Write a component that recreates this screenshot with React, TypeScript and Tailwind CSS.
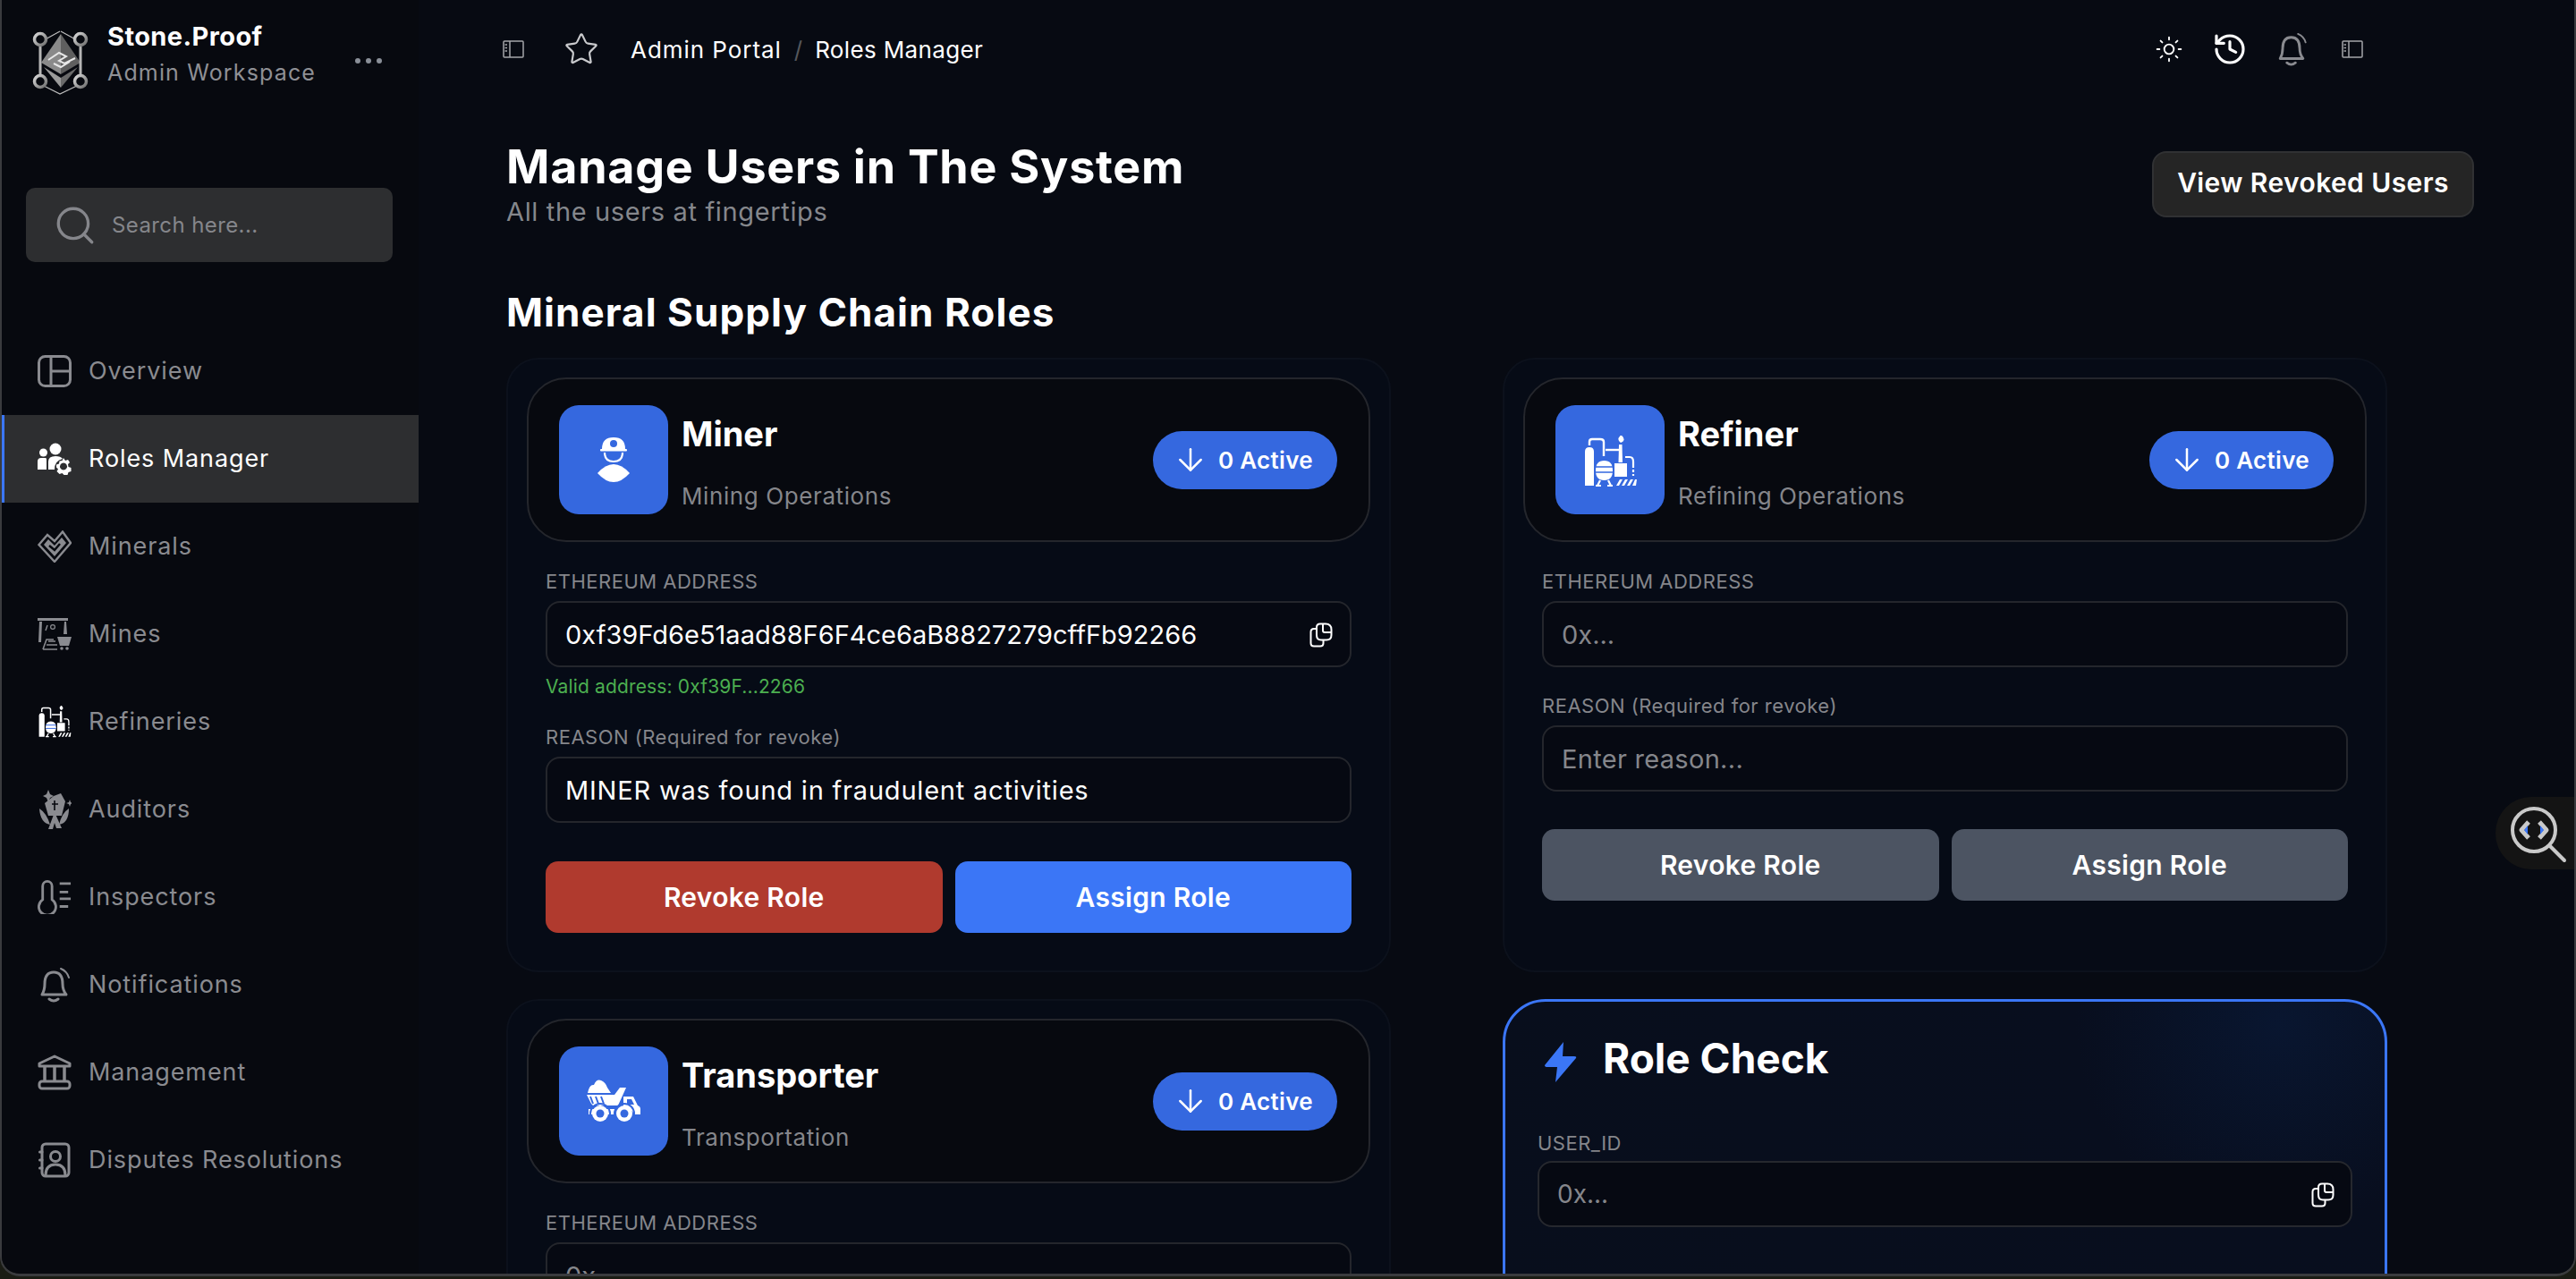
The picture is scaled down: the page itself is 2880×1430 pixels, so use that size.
import { ArrowDown, History, Search, Star, Sun } from "lucide-react";
import type { ReactNode } from "react";

type IconProps = { className?: string };

const Logo = () => (
  <svg viewBox="0 0 63 73" className="w-[63px] h-[73px] shrink-0">
    <defs>
      <linearGradient id="ring" x1="0" y1="0" x2="1" y2="1">
        <stop offset="0" stopColor="#d8d8d8" />
        <stop offset="1" stopColor="#6f6f6f" />
      </linearGradient>
    </defs>
    <path d="M31 2 L11 13 M32 2 L52 13 M11 62 L31 72 L52 62" fill="none" stroke="#bdbdbd" strokeWidth="1.2" />
    <path d="M32 5 L10 37 L32 50 Z" fill="#8a8a8a" />
    <path d="M32 5 L54 37 L32 50 Z" fill="#5f5f5f" />
    <path d="M13 42 L32 54 V65 Z" fill="#9a9a9a" />
    <path d="M51 42 L32 54 V65 Z" fill="#6a6a6a" />
    <path d="M18 34 L30 26 L38 30 L30 35 L36 38 L48 32 M24 38 L32 42 L42 36" fill="none" stroke="#e8e8e8" strokeWidth="2" />
    <path d="M9 19 V53 M54 19 V53" stroke="#b5b5b5" strokeWidth="3" />
    {[[9, 11], [54, 11], [9, 58], [54, 58]].map(([cx, cy]) => (
      <circle key={`${cx}-${cy}`} cx={cx} cy={cy} r="6.5" fill="#07090f" stroke="url(#ring)" strokeWidth="3.5" />
    ))}
  </svg>
);

const PanelIcon = ({ className }: IconProps) => (
  <svg viewBox="0 0 24 20" fill="none" stroke="currentColor" strokeWidth="1.5" className={className}>
    <rect x="1" y="1" width="22" height="18" rx="1" />
    <path d="M8 1 V19" />
    <path d="M2.5 5 H5 M2.5 8.5 H5 M2.5 12 H5" strokeWidth="1.4" />
  </svg>
);

const OverviewIcon = ({ className }: IconProps) => (
  <svg viewBox="0 0 38 36" fill="none" stroke="currentColor" strokeWidth="3" className={className}>
    <rect x="1.5" y="1.5" width="35" height="33" rx="7" />
    <path d="M15 2 V34 M15 18 H36" />
  </svg>
);

const RolesIcon = ({ className }: IconProps) => (
  <svg viewBox="0 0 38 36" fill="currentColor" className={className}>
    <circle cx="6.5" cy="11" r="4.5" />
    <circle cx="20" cy="7" r="6.5" />
    <path d="M0 30 V21 Q0 17 4 17 H9 Q10 17 10 19 V30 Z" />
    <path d="M12 30 V21 Q12 15 20 15 Q26 15 28 18 Q19 20 19 30 Z" />
    <path
      fillRule="evenodd"
      d="M29 17 l2 3 3 -1 2 3 -2 2 .5 3 3 1 V32 l-3 1 -1 3 h-4 l-2 -2 -3 1 -3 -3 1.5 -2.5 -2 -2 v-3 l3 -1 .5 -3 3 -.5 z M29 22.5 a4 4 0 1 0 .01 0 z"
    />
  </svg>
);

const MineralsIcon = ({ className }: IconProps) => (
  <svg viewBox="0 0 38 36" fill="none" stroke="currentColor" strokeWidth="2.4" className={className}>
    <path d="M1.5 16 L11 5 L19 12 L28 1.5 L37 14 L19 35 Z" />
    <path d="M7 16 L12 10 L19 17 L27 8 L32 14 L19 29 Z" fill="currentColor" stroke="none" />
    <path d="M13 17 L19 22 L25 15" stroke="#07090f" strokeWidth="2.5" />
  </svg>
);

const MinesIcon = ({ className }: IconProps) => (
  <svg viewBox="0 0 38 36" fill="currentColor" className={className}>
    <path d="M0 0 H34 V3 H0 Z" />
    <path d="M2 4 H5 L4 27 H1 Z M30 4 H32 L33 18 H29 Z" />
    <path d="M9 14 L11 8" stroke="currentColor" strokeWidth="1.4" />
    <circle cx="17" cy="10" r="2.4" fill="none" stroke="currentColor" strokeWidth="1.2" />
    <path d="M22 21 H38 L35 31 H25 Z" />
    <circle cx="27" cy="34" r="1.8" />
    <circle cx="33" cy="34" r="1.8" />
    <path d="M6 35 L10 24 H18 M10 30 H22 M6 35 H22 M12 26 H20" fill="none" stroke="currentColor" strokeWidth="1.6" />
  </svg>
);

const RefineryIcon = ({ className }: IconProps) => (
  <svg viewBox="32 34 60 58" fill="#fff" className={className}>
    <path d="M33 52 Q33 47 38 47 Q43 47 43 52 V90 H33 Z" />
    <path d="M38 45 V41 Q38 38 41 38 H50 Q54 38 54 41 V57" fill="none" stroke="#fff" strokeWidth="2.4" />
    <path d="M56 50 H71" stroke="#fff" strokeWidth="2.4" />
    <path d="M71 44 H74.5 L75 64 H70.5 Z" />
    <path d="M73 42 Q69 39 71 36 Q72 35 73 33 Q77 36 76.5 39 Q76 41 73 42 Z" />
    <path d="M45 73 Q45 62 54.5 62 Q64 62 64 73 Q64 84 54.5 84 Q45 84 45 73 Z" />
    <path d="M45 69 H64 M45 75 H64" stroke="#3568df" strokeWidth="1.6" />
    <path d="M47 90 L50 84 M62 90 L59 84 M45 90 H51 M58 90 H64" stroke="#fff" strokeWidth="2.2" />
    <rect x="66" y="65" width="14" height="15" />
    <path d="M78 58 H83 Q87 58 87 63 V70" fill="none" stroke="#fff" strokeWidth="2.2" />
    <path d="M87 72 V75 M87 77 V79" stroke="#fff" strokeWidth="2.2" />
    <path d="M68 90 L72 83 H75 L71 90 Z M74 90 L78 83 H81 L77 90 Z M80 90 L84 83 H87 L83 90 Z M86 90 L89 83 H91 L90 90 Z" />
  </svg>
);

const AuditorsIcon = ({ className }: IconProps) => (
  <svg viewBox="0 0 38 46" fill="currentColor" className={className}>
    <path d="M12 1 L14 6 L18 8 L14 10 L12 15 L10 10 L6 8 L10 6 Z" />
    <path d="M36 12 L37 15 L39 16 L37 17 L36 20 L35 17 L32 16 L35 15 Z" />
    <path d="M18 8 L26 5 L31 14 L27 30 H12 L8 16 Z" />
    <path d="M19 13 V24 M16 17 H23" stroke="#07090f" strokeWidth="1.6" fill="none" />
    <path d="M2 22 Q10 27 14 40 Q3 38 2 22 Z" />
    <path d="M35 22 Q27 27 24 40 Q35 38 35 22 Z" />
    <path d="M19 26 L27 44 H21 L19 38 L17 45 H12 Z" />
  </svg>
);

const InspectorsIcon = ({ className }: IconProps) => (
  <svg viewBox="0 0 40 40" fill="none" stroke="currentColor" strokeWidth="3" className={className}>
    <path d="M6 23 V7 a5.5 5.5 0 0 1 11 0 V23 a10 10 0 1 1 -11 0 Z" />
    <path d="M26 4 H39 M26 14 H36 M26 22 H39 M26 31 H36" />
  </svg>
);

const BellIcon = ({ className }: IconProps) => (
  <svg viewBox="0 0 34 40" fill="none" stroke="currentColor" strokeWidth="3" strokeLinecap="round" className={className}>
    <path d="M3 31 Q6 26 6 19 Q6 6 16 6 Q26 6 26 19 Q26 26 30 31 Z" strokeLinejoin="round" />
    <path d="M11 36 Q16 40 21 36" />
    <path d="M24 2 Q31 5 33 12" strokeWidth="2" />
  </svg>
);

const ManagementIcon = ({ className }: IconProps) => (
  <svg viewBox="0 0 38 40" fill="none" stroke="currentColor" strokeWidth="3" strokeLinejoin="round" className={className}>
    <path d="M2 13 V10 L19 2 L36 10 V13 Z" />
    <path d="M8 14 V29 M19 14 V29 M30 14 V29" strokeWidth="3.5" />
    <rect x="2" y="30" width="34" height="8" rx="3" />
  </svg>
);

const DisputesIcon = ({ className }: IconProps) => (
  <svg viewBox="0 0 36 40" fill="none" stroke="currentColor" strokeWidth="3" strokeLinecap="round" className={className}>
    <rect x="4" y="2" width="30" height="36" rx="4" />
    <path d="M1.5 11 H4 M1.5 20 H4 M1.5 29 H4" />
    <circle cx="19" cy="16" r="5.5" />
    <path d="M8 37 Q8 25 19 25 Q30 25 30 37" />
  </svg>
);

const CopyIcon = ({ className }: IconProps) => (
  <svg viewBox="0 0 26 28" fill="none" stroke="currentColor" strokeWidth="2" className={className}>
    <path d="M8 7 H5 Q1.5 7 1.5 10.5 V23 Q1.5 26.5 5 26.5 H12 Q15.5 26.5 15.5 23 V20" />
    <path d="M12 1.5 H18 Q24.5 1.5 24.5 8 V14 Q24.5 19.5 19 19.5 H13 Q8 19.5 8 14 V5.5 Q8 1.5 12 1.5 Z" />
    <path d="M15 2 V9 Q15 11 17 11 H24" />
  </svg>
);

const MinerIcon = () => (
  <svg viewBox="0 0 122 122" className="w-full h-full">
    <path d="M48 49 Q48 36 61 36 Q74 36 74 49 Z" fill="#fff" />
    <circle cx="61" cy="43" r="4" fill="#3568df" />
    <rect x="46" y="49" width="30" height="2.5" rx="1" fill="#fff" />
    <path d="M51 53 Q51 63 61 63 Q71 63 71 53" fill="none" stroke="#fff" strokeWidth="2.2" />
    <path d="M43 76 Q61 56 79 76 Q61 96 43 76 Z" fill="#fff" />
  </svg>
);

const RefinerIcon = () => (
  <div className="pl-[32px] pt-[34px]">
    <RefineryIcon className="w-[60px] h-[58px]" />
  </div>
);

const TruckIcon = () => (
  <svg viewBox="0 0 122 122" className="w-full h-full" fill="#fff">
    <path d="M32 52 Q34 42 39 43 Q42 36 47 38 Q52 40 54 46 L58 52 Z" />
    <path d="M31 54 H62 L68 46 L75 46 L71 55 L66 66 H38 L36 64 Z" />
    <path d="M35 56 L38 64 M41 56 L44 64 M47 56 L50 64" stroke="#3568df" strokeWidth="2" />
    <path d="M72 56 H83 L88 66 Q91 67 91 70 V76 H84 Q80 68 72 68 Z" />
    <path d="M76 59 H81 L84 65 H76 Z" fill="#3568df" />
    <path d="M33 70 H62 V76 H33 Z" />
    <circle cx="46" cy="75" r="9" />
    <circle cx="46" cy="75" r="4.5" fill="#3568df" />
    <circle cx="73" cy="75" r="9" />
    <circle cx="73" cy="75" r="4.5" fill="#3568df" />
    <circle cx="46" cy="75" r="11" fill="none" stroke="#3568df" strokeWidth="2" />
    <circle cx="73" cy="75" r="11" fill="none" stroke="#3568df" strokeWidth="2" />
  </svg>
);

const navItems = [
  { label: "Overview", icon: <OverviewIcon className="w-[38px] h-[36px]" /> },
  { label: "Roles Manager", icon: <RolesIcon className="w-[38px] h-[36px]" />, active: true },
  { label: "Minerals", icon: <MineralsIcon className="w-[38px] h-[36px]" /> },
  { label: "Mines", icon: <MinesIcon className="w-[38px] h-[36px]" /> },
  { label: "Refineries", icon: <RefineryIcon className="w-[37px] h-[36px]" /> },
  { label: "Auditors", icon: <AuditorsIcon className="w-[38px] h-[46px]" /> },
  { label: "Inspectors", icon: <InspectorsIcon className="w-[38px] h-[38px]" /> },
  { label: "Notifications", icon: <BellIcon className="w-[34px] h-[40px]" /> },
  { label: "Management", icon: <ManagementIcon className="w-[38px] h-[40px]" /> },
  { label: "Disputes Resolutions", icon: <DisputesIcon className="w-[36px] h-[40px]" /> },
];

const Sidebar = () => (
  <aside className="w-[466px] shrink-0 flex flex-col bg-[#07090f]">
    <div className="flex items-center pl-[34px] pr-[41px] pt-[10px] h-[128px]">
      <Logo />
      <div className="ml-[21px] flex-1 -mt-[16px]">
        <div className="text-[29px] leading-[40px] font-bold text-white tracking-[0.4px]">Stone.Proof</div>
        <div className="text-[25px] leading-[40px] text-[#8f9095] tracking-[1.15px]">Admin Workspace</div>
      </div>
      <div className="flex gap-[6px] -mt-[2px]">
        <span className="w-[6px] h-[6px] rounded-full bg-[#8a8f98]" />
        <span className="w-[6px] h-[6px] rounded-full bg-[#8a8f98]" />
        <span className="w-[6px] h-[6px] rounded-full bg-[#8a8f98]" />
      </div>
    </div>

    {/* Search */}
    <div className="ml-[27px] mt-[82px] w-[410px] h-[83px] rounded-[10px] bg-[#2d2e30] flex items-center pl-[30px]">
      <Search className="w-[50px] h-[50px] text-[#85868b]" strokeWidth={1.6} />
      <span className="ml-[16px] text-[24px] text-[#85868b] tracking-[0.4px]">Search here...</span>
    </div>

    {/* Nav */}
    <nav className="mt-[73px]">
      {navItems.map((item) => (
        <a
          key={item.label}
          href="#"
          className={`flex items-center h-[98px] ${
            item.active
              ? "bg-[#2d2e30] text-white border-l-[3px] border-[#3b76f6] pl-[37px]"
              : "text-[#8a8b90] pl-[40px]"
          }`}
        >
          <span className="w-[38px] flex justify-center shrink-0">{item.icon}</span>
          <span className="ml-[19px] text-[27px] tracking-[0.9px]">{item.label}</span>
        </a>
      ))}
    </nav>
  </aside>
);

const TopBar = () => (
  <header className="h-[110px] shrink-0 flex items-center text-white pr-[236px]">
    <PanelIcon className="ml-[94px] w-[24px] h-[20px] text-[#a5a6aa]" />
    <Star className="ml-[44px] w-[40px] h-[40px] text-[#c9cacd]" strokeWidth={1.3} />
    <span className="ml-[35px] text-[26px] tracking-[0.95px]">Admin Portal</span>
    <span className="mx-[14px] text-[26px] text-[#55575c]">/</span>
    <span className="text-[26px] tracking-[0.35px]">Roles Manager</span>
    <div className="ml-auto flex items-center">
      <Sun className="w-[32px] h-[32px] text-white" strokeWidth={1.4} />
      <History className="ml-[32px] w-[40px] h-[40px] text-white" strokeWidth={1.9} />
      <BellIcon className="ml-[33px] w-[33px] h-[38px] text-[#8a8b90]" />
      <PanelIcon className="ml-[39px] w-[24px] h-[20px] text-[#a5a6aa]" />
    </div>
  </header>
);

type RoleCardProps = {
  title: string;
  subtitle: string;
  icon: ReactNode;
  address?: string;
  reason?: string;
  valid?: string;
  // the last row runs off the bottom of the window, only its first field shows
  cutOff?: boolean;
};

type FieldProps = {
  label: string;
  value?: string;
  placeholder: string;
  copy?: boolean;
  tracking?: string;
};

const Field = ({ label, value, placeholder, copy, tracking = "tracking-[0.2px]" }: FieldProps) => (
  <div>
    <label className="block text-[22px] leading-[26px] text-[#85868b] mb-[9px] tracking-[0.5px]">{label}</label>
    <div className="relative">
      <input
        readOnly
        value={value ?? ""}
        placeholder={placeholder}
        className={`w-full h-[74px] rounded-[16px] border-2 border-[#24262c] bg-[#060912] pl-[20px] pr-[60px] text-[29px] text-white placeholder:text-[#85868b] outline-none ${tracking}`}
      />
      {copy && <CopyIcon className="absolute right-[21px] top-[24px] w-[26px] h-[28px] text-white" />}
    </div>
  </div>
);

const RoleCard = ({ title, subtitle, icon, address, reason, valid, cutOff }: RoleCardProps) => {
  const active = Boolean(address);
  return (
    <section className="rounded-[36px] border-2 border-[#0c111c] bg-[#060b16] pt-[20px] pb-[42px] px-[21px]">
      <div className="h-[184px] rounded-[44px] border-2 border-[#24262c] bg-[#07090f] flex items-center pl-[34px] pr-[35px]">
        <div className="w-[122px] h-[122px] rounded-[22px] bg-[#3568df] shrink-0">{icon}</div>
        <div className="ml-[15px] flex-1 self-stretch pt-[36px]">
          <div className="text-[38px] leading-[50px] font-bold text-white">{title}</div>
          <div className="mt-[29px] text-[26px] leading-[32px] text-[#85868b] tracking-[0.6px]">{subtitle}</div>
        </div>
        <div className="h-[65px] w-[206px] rounded-full bg-[#3568df] text-white flex items-center pl-[22px]">
          <ArrowDown className="w-[40px] h-[40px]" strokeWidth={1.5} />
          <span className="ml-[11px] text-[26px] font-semibold tracking-[0.3px]">0 Active</span>
        </div>
      </div>

      <div className="px-[21px] mt-[31px]">
        <Field label="ETHEREUM ADDRESS" value={address} placeholder="0x..." copy={active} tracking="tracking-[0px]" />
        {valid && <p className="mt-[10px] text-[21px] leading-[24px] text-[#4caf50] tracking-[0.15px]">{valid}</p>}
        {!cutOff && (
          <>
            <div className={valid ? "mt-[31px]" : "mt-[30px]"}>
              <Field
                label="REASON (Required for revoke)"
                value={reason}
                placeholder="Enter reason..."
                tracking={reason ? "tracking-[0.8px]" : "tracking-[0.3px]"}
              />
            </div>
            <div className={`grid grid-cols-2 gap-[14px] ${valid ? "mt-[43px]" : "mt-[42px]"}`}>
              <button className={`h-[80px] rounded-[14px] text-white text-[30px] font-semibold tracking-[0.3px] ${active ? "bg-[#b03a2e]" : "bg-[#4c5462]"}`}>
                Revoke Role
              </button>
              <button className={`h-[80px] rounded-[14px] text-white text-[30px] font-semibold tracking-[0.3px] ${active ? "bg-[#3b76f6]" : "bg-[#4c5462]"}`}>
                Assign Role
              </button>
            </div>
          </>
        )}
      </div>
    </section>
  );
};

const RoleCheck = () => (
  <section className="rounded-[48px] border-[3px] border-[#3b76f6] bg-[radial-gradient(circle_at_88%_6%,#091630,#080e1e_24%,#080e1c)] pt-[29px] px-[36px] pb-[60px] h-[420px]">
    <div className="flex items-center">
      <svg viewBox="0 0 36 45" className="w-[36px] h-[45px] ml-[8px] mt-[8px]" fill="#3b76f6">
        <path d="M21 0 L0 26 Q0 28 3 28 L14 28 L12 45 L35 18 Q36 16 33 16 L20 16 Z" />
      </svg>
      <h3 className="ml-[29px] text-[46px] font-bold text-white">Role Check</h3>
    </div>
    <label className="block mt-[47px] text-[22px] leading-[26px] text-[#85868b] mb-[7px] tracking-[0.5px]">USER_ID</label>
    <div className="relative">
      <input
        readOnly
        placeholder="0x..."
        className="w-full h-[74px] rounded-[16px] border-2 border-[#26282e] bg-[#060912] pl-[20px] text-[28px] placeholder:text-[#85868b] outline-none"
      />
      <CopyIcon className="absolute right-[20px] top-[24px] w-[26px] h-[28px] text-white" />
    </div>
  </section>
);

const Main = () => (
  <main className="flex-1 min-w-0 relative flex flex-col bg-[#070a12]">
    <TopBar />
    <div className="pl-[98px]">
      <div className="flex items-start justify-between pr-[112px] pt-[49px]">
        <div>
          <h1 className="text-[52px] leading-[56px] font-bold text-white tracking-[0.75px]">Manage Users in The System</h1>
          <p className="mt-[5px] text-[29px] leading-[34px] text-[#85878c] tracking-[0.64px]">All the users at fingertips</p>
        </div>
        <button className="mt-[10px] h-[74px] w-[360px] rounded-[16px] border-2 border-[#303133] bg-[#252525] pb-[4px] text-white text-[30px] font-semibold tracking-[0.4px]">
          View Revoked Users
        </button>
      </div>
      <h2 className="mt-[70px] text-[44px] leading-[50px] font-bold text-white tracking-[1.05px]">Mineral Supply Chain Roles</h2>
      <div className="mt-[26px] grid grid-cols-[989px_989px] gap-x-[125px] gap-y-[30px]">
        <RoleCard
          title="Miner"
          subtitle="Mining Operations"
          icon={<MinerIcon />}
          address="0xf39Fd6e51aad88F6F4ce6aB8827279cffFb92266"
          reason="MINER was found in fraudulent activities"
          valid="Valid address: 0xf39F...2266"
        />
        <RoleCard title="Refiner" subtitle="Refining Operations" icon={<RefinerIcon />} />
        <RoleCard title="Transporter" subtitle="Transportation" icon={<TruckIcon />} cutOff />
        <RoleCheck />
      </div>
    </div>

    {/* Floating code search button */}
    <div className="absolute right-0 top-[891px] w-[88px] h-[81px] rounded-l-[40px] bg-[#141414] pl-[17px] pt-[11px]">
      <svg viewBox="0 0 64 64" className="w-[64px] h-[64px]" fill="none">
        <circle cx="26" cy="26" r="24" stroke="#c9c9c9" strokeWidth="4" />
        <path d="M44 44 L60 60" stroke="#c9c9c9" strokeWidth="4" strokeLinecap="round" />
        <path d="M20 17 L12 26 L20 35" stroke="#c9c9c9" strokeWidth="5" strokeLinejoin="round" />
        <path d="M32 17 L40 26 L32 35" stroke="#c9c9c9" strokeWidth="5" strokeLinejoin="round" />
        <path d="M19 21 L15 26 L19 31 Z M33 21 L37 26 L33 31 Z" fill="#3b76f6" />
      </svg>
    </div>
  </main>
);

const App = () => (
  <div className="h-screen overflow-hidden bg-[#1a1c14] font-[Inter,sans-serif]">
    <div className="h-[1427px] overflow-hidden flex rounded-b-[22px] border-x-2 border-b-[3px] border-[#3a3b3e]">
      <Sidebar />
      <Main />
    </div>
  </div>
);

export default App;
